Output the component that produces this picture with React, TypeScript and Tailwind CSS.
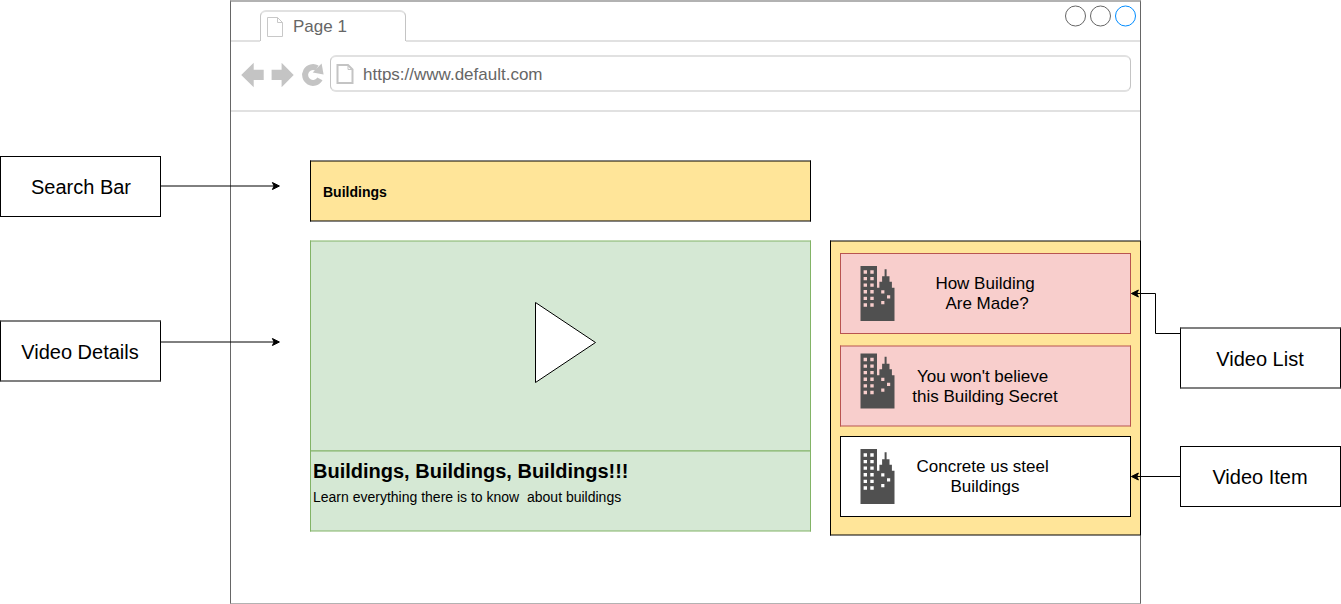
import React from "react";

const LEFT_WINDOWS_Y = [4.3, 10.9, 17.4, 24.1, 30.7, 37.3];

function Building({ className = "", offset = 0 }: { className?: string; offset?: number }) {
  return (
    <svg className={className} width="35" height="56" viewBox={`0 ${-offset} 35 56`}>
      <path
        fill="#505050"
        fillRule="evenodd"
        d={
          "M.5 0H17v21.7h2.4v-6h2.7v-5.4h2.5V3.3h2v7h2.9v5.4h2.4v6h2.6V55H.5Z" +
          LEFT_WINDOWS_Y.map((y) => `M3.6 ${y}h3.4v3.4h-3.4ZM10.3 ${y}h3.4v3.4h-3.4Z`).join("") +
          "M21.2 24.2h3.2v3.2h-3.2ZM27 29.2h3.2v3.2H27ZM21.2 35h3.2v3.2h-3.2Z"
        }
      />
    </svg>
  );
}

function Label({ children, className }: { children: React.ReactNode; className: string }) {
  return (
    <div
      className={`flex w-[161px] items-center justify-center border-x border-x-black bg-white text-xl leading-6 ${className}`}
    >
      {children}
    </div>
  );
}

const crispLabel = "h-[61px] border-y border-y-black";
const softLabel = "h-[62px] border-y-2 border-y-[#808080] pt-0.5 pr-px";

function VideoCard({
  lines,
  className,
  iconClass,
  iconOffset = 0,
  textClass = "",
}: {
  lines: string[];
  className: string;
  iconClass: string;
  iconOffset?: number;
  textClass?: string;
}) {
  return (
    <div className={`grid grid-cols-[1fr_auto_1fr] border-x pr-px ${className}`}>
      <Building className={`ml-[19px] ${iconClass}`} offset={iconOffset} />
      <div className={`self-center text-center text-[17px] leading-5 whitespace-pre ${textClass}`}>
        {lines.map((line) => (
          <div key={line}>{line}</div>
        ))}
      </div>
    </div>
  );
}

function WindowButton({ color }: { color: string }) {
  return (
    <svg width="21" height="22" viewBox="0 0 21 22" fill="none">
      <circle cx="10.5" cy="11" r="10" stroke={color} />
    </svg>
  );
}

function BrowserHeader() {
  return (
    <>
      <div className="flex h-10 justify-between border-b-2 border-[#e1e1e1]">
        <div className="mt-2 ml-[29px] flex h-[31px] w-[146px] rounded-t-[6px] border-x border-t-2 border-x-[#c4c4c4] border-t-[#e1e1e1] bg-white shadow-[0_1px_0_#fff]">
          <svg className="mt-[5px] ml-[6px]" width="16" height="20" viewBox="0 0 16 20" fill="none" stroke="#c8c8c8">
            <path d="M.5.5h10l5 5v14H.5ZM10.5.5v5h5" />
          </svg>
          <span className="mt-[5px] ml-[10px] text-[17px] leading-5 text-[#666]">Page 1</span>
        </div>
        <div className="mt-[3px] mr-1 flex gap-1">
          <WindowButton color="#666" />
          <WindowButton color="#666" />
          <WindowButton color="#008cff" />
        </div>
      </div>
      <div className="flex h-[70px] border-b-2 border-[#e1e1e1]">
        <svg className="mt-[18px] ml-[9px] shrink-0" width="90" height="30" viewBox="240 60 90 30">
          <path fill="#c4c4c4" d="M241.2 75 253.7 62.7v7h10V80h-10v7.3ZM293.7 75 281.6 62.7v7h-10V80h10v7.3Z" />
          <path d="M317 68.2A7.9 7.9 0 1 0 319.9 78.9" fill="none" stroke="#c4c4c4" strokeWidth="6" />
          <path d="M321.6 63.6 312.7 72.6 323.6 74.6Z" fill="#c4c4c4" />
        </svg>
        <div className="mt-[13px] flex h-[37px] w-[801px] shrink-0 rounded-[6px] border-x border-y-2 border-x-[#c4c4c4] border-y-[#e1e1e1]">
          <svg className="mt-[6px] ml-[5px]" width="18" height="22" viewBox="0 0 18 22" fill="none" stroke="#c4c4c4">
            <path strokeWidth="2" d="M1.5 2H12l4.5 4.5V20h-15Z" />
            <path d="M12 2v4.5h4.5" />
          </svg>
          <span className="mt-2 ml-[9px] text-[17px] leading-5 text-[#666]">https://www.default.com</span>
        </div>
      </div>
    </>
  );
}

export default function App() {
  return (
    <div className="relative flex h-[604px] w-[1341px] overflow-hidden bg-white font-['Liberation_Sans',Arial,sans-serif] text-black">
      <aside className="flex w-[230px] shrink-0 flex-col pt-[156px]">
        <Label className={`pl-px ${crispLabel}`}>Search Bar</Label>
        <Label className={`mt-[103px] ${softLabel}`}>Video Details</Label>
      </aside>

      <main className="flex w-[911px] shrink-0 flex-col border-x border-t-2 border-b border-x-[#666] border-y-[#b2b2b2]">
        <BrowserHeader />
        <div className="flex pt-12 pl-[79px]">
          <div className="w-[501px] shrink-0">
            <div className="flex h-[62px] items-center border-x border-y border-x-black border-y-[#808080] bg-[#ffe599] pt-0.5 pl-3 text-sm font-bold shadow-[inset_0_1px_0_#80734d,inset_0_-1px_0_#80734d]">
              Buildings
            </div>
            <div className="mt-[18px] flex h-[211px] border-x border-t border-x-[#82b366] border-t-[#c0d9b2] bg-[#d5e8d4] shadow-[inset_0_1px_0_#abcd9d,inset_0_-1px_0_#97c082]">
              <svg className="mt-[60px] ml-[223px]" width="64" height="84" viewBox="534 301 64 84">
                <path d="M535.5 302.5 595.5 342.5 535.5 382.5Z" fill="#fff" stroke="#000" strokeLinejoin="miter" />
              </svg>
            </div>
            <div className="h-[81px] border-x border-b border-x-[#82b366] border-b-[#c0d9b2] bg-[#d5e8d4] pt-2 pl-[2px] shadow-[inset_0_1px_0_#abcd9d,inset_0_-1px_0_#abcd9d]">
              <h1 className="text-xl leading-6 font-bold">Buildings, Buildings, Buildings!!!</h1>
              <p className="mt-1 text-sm leading-5 whitespace-pre">Learn everything there is to know  about buildings</p>
            </div>
          </div>

          <section className="mt-20 -mr-px ml-[19px] flex h-[296px] w-[311px] shrink-0 flex-col border-x border-y border-x-black border-y-[#808080] bg-[#ffe599] px-[9px] pt-3 shadow-[inset_0_1px_0_#80734d,inset_0_-1px_0_#80734d]">
            <VideoCard
              lines={["How Building", " Are Made? "]}
              className="h-[81px] border-y border-[#b85450] bg-[#f8cecc]"
              iconClass="mt-3"
              textClass="[&>div:last-child]:-mr-[5px]"
            />
            <VideoCard
              lines={["You won't believe ", "this Building Secret"]}
              className="mt-[11px] h-[82px] border-y border-x-[#b85450] border-y-[#dc9d75] bg-[#f8cecc] shadow-[inset_0_1px_0_#d8918e,inset_0_-1px_0_#d8918e]"
              iconClass="mt-[7px]"
              iconOffset={0.5}
              textClass="pt-0.5"
            />
            <VideoCard
              lines={["Concrete us steel ", "Buildings"]}
              className="mt-[9px] h-[81px] border-y border-black bg-white"
              iconClass="mt-3"
            />
          </section>
        </div>
      </main>

      <aside className="flex w-[200px] shrink-0 flex-col pt-[327px] pl-[39px]">
        <Label className={softLabel}>Video List</Label>
        <Label className={`mt-[57px] pr-px ${crispLabel}`}>Video Item</Label>
      </aside>

      <svg
        className="pointer-events-none absolute inset-0"
        width="1341"
        height="604"
        viewBox="0 0 1341 604"
        fill="none"
        stroke="#000"
        strokeMiterlimit="10"
      >
        <path d="M161 186H274.1M161 342H274.1M1180 333.5H1155.5V293.5H1136.9M1180 476.5H1136.9" />
        <g fill="#000">
          <path d="M279.4 186l-7 3.5 1.7-3.5-1.7-3.5Z" />
          <path d="M279.4 342l-7 3.5 1.7-3.5-1.7-3.5Z" />
          <path d="M1131.4 293.5l7-3.5-1.7 3.5 1.7 3.5Z" />
          <path d="M1131.4 476.5l7-3.5-1.7 3.5 1.7 3.5Z" />
        </g>
      </svg>
    </div>
  );
}
